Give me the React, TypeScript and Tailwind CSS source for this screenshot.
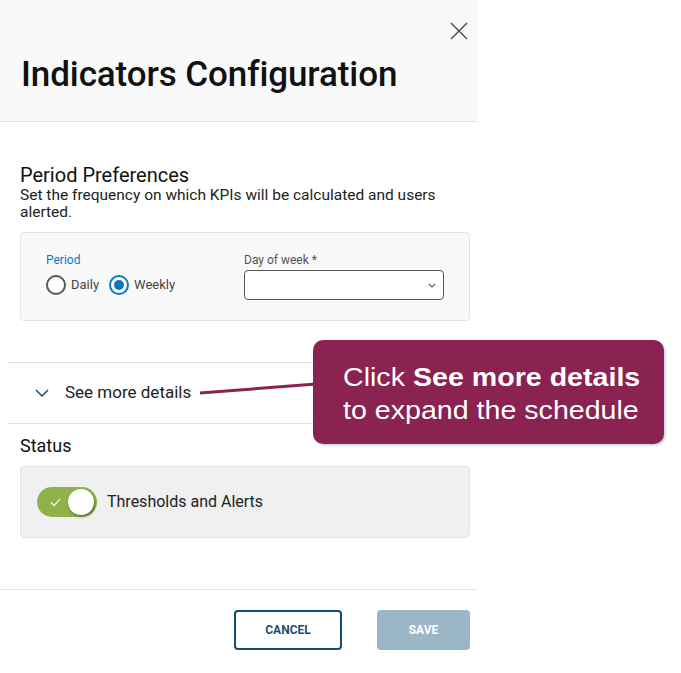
import React from "react";

export default function App() {
  const font = { fontFamily: "Roboto, 'Noto Sans', sans-serif" };
  return (
    <div className="relative w-[681px] h-[673px] bg-white overflow-hidden" style={font}>
      <div className="w-[477px] h-[673px] flex flex-col bg-white">
        {/* header */}
        <div className="relative h-[122px] bg-[#f9f9f9] border-b border-[#e3e3e3] flex items-end pl-[21px] pb-[26px]">
          <h1 className="text-[35px] leading-[40px] font-medium text-[#111] tracking-[-0.1px]">Indicators Configuration</h1>
          <button className="absolute right-[8px] top-[21px] w-[19px] h-[19px] text-[#444]">
            <svg viewBox="0 0 18 18" width="18" height="18" stroke="currentColor" strokeWidth="1.3" fill="none">
              <path d="M1 1 L17 17 M17 1 L1 17" />
            </svg>
          </button>
        </div>
        {/* period preferences */}
        <div className="pl-[20px] pr-[7px] pt-[41px]">
          <div className="text-[20px] leading-[24px] text-[#111]">Period Preferences</div>
          <div className="text-[15.5px] leading-[17px] text-[#222]">
            Set the frequency on which KPIs will be calculated and users alerted.
          </div>
          <div className="mt-[11px] h-[89px] bg-[#f9f9f9] border border-[#e3e3e3] rounded-[4px] flex pl-[25px] pt-[20px]">
            <div className="w-[198px]">
              <div className="text-[12px] leading-[14px] text-[#0a78c2]">Period</div>
              <div className="flex items-center mt-[8px]">
                <span className="w-[20px] h-[20px] rounded-full border-2 border-[#555] bg-white" />
                <span className="ml-[5px] text-[13px] text-[#444]">Daily</span>
                <span className="ml-[10px] w-[20px] h-[20px] rounded-full border-2 border-[#0a78c2] bg-white flex items-center justify-center">
                  <span className="w-[10px] h-[10px] rounded-full bg-[#0a78c2]" />
                </span>
                <span className="ml-[5px] text-[13px] text-[#444]">Weekly</span>
              </div>
            </div>
            <div>
              <div className="text-[12px] leading-[14px] text-[#555]">Day of week *</div>
              <div className="mt-[3px] w-[200px] h-[30px] bg-white border border-[#555] rounded-[4px] flex items-center justify-end pr-[7px]">
                <svg viewBox="0 0 10 6" width="8" height="5" fill="none" stroke="#444" strokeWidth="1.3">
                  <path d="M1 1 L5 5 L9 1" />
                </svg>
              </div>
            </div>
          </div>
        </div>
        {/* see more details */}
        <div className="mt-[41px] ml-[8px] h-[62px] border-t border-b border-[#dedede] flex items-center pl-[27px]">
          <svg viewBox="0 0 14 8" width="14" height="8" fill="none" stroke="#1b4f72" strokeWidth="1.5">
            <path d="M1 1 L7 7 L13 1" />
          </svg>
          <span className="ml-[16px] text-[17px] text-[#222]">See more details</span>
        </div>
        {/* status */}
        <div className="pl-[20px] pr-[7px] pt-[11px]">
          <div className="text-[18px] leading-[22px] text-[#111]">Status</div>
          <div className="mt-[9px] h-[72px] bg-[#f0f0f0] border border-[#e3e3e3] rounded-[4px] flex items-center pl-[16px]">
            <div className="relative w-[60px] h-[30px] rounded-full bg-[#8fb34a] flex items-center">
              <svg className="ml-[13px]" viewBox="0 0 12 10" width="11" height="9" fill="none" stroke="white" strokeWidth="1.2">
                <path d="M1 5 L4.5 8.5 L11 1" />
              </svg>
              <span className="absolute right-[3px] top-[2px] w-[26px] h-[26px] rounded-full bg-white shadow-[1px_2px_3px_rgba(0,0,0,0.35)]" />
            </div>
            <span className="ml-[10px] text-[16px] text-[#222]">Thresholds and Alerts</span>
          </div>
        </div>
        {/* footer */}
        <div className="mt-[51px] border-t border-[#e3e3e3] flex justify-end gap-[35px] pr-[7px] pt-[20px]">
          <button className="w-[108px] h-[40px] border-2 border-[#0f4c75] rounded-[4px] text-[12px] font-bold text-[#1b4f72]">
            CANCEL
          </button>
          <button className="w-[93px] h-[40px] bg-[#9bb7c7] rounded-[4px] text-[12px] font-bold text-white">
            SAVE
          </button>
        </div>
      </div>

      {/* callout connector */}
      <svg className="absolute left-0 top-0 pointer-events-none" width="681" height="673">
        <line x1="200" y1="393" x2="316" y2="384" stroke="#8a2252" strokeWidth="3" />
      </svg>
      {/* callout */}
      <div
        className="absolute left-[313px] top-[340px] w-[351px] h-[104px] rounded-[10px] bg-[#8a2252] shadow-[2px_2px_1px_rgba(180,200,230,0.6)] flex flex-col items-start justify-center pl-[30px] text-white text-[26px] leading-[33px] pt-[3px]"
        style={{ fontFamily: "'Liberation Sans', Arial, sans-serif" }}
      >
        <div className="scale-x-[1.1] origin-left whitespace-nowrap">
          Click <b>See more details</b>
        </div>
        <div className="scale-x-[1.1] origin-left whitespace-nowrap">to expand the schedule</div>
      </div>
    </div>
  );
}
